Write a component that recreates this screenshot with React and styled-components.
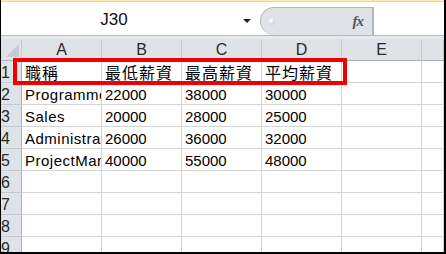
import { Fragment } from "react"
import styled, { createGlobalStyle } from "styled-components"

const GlobalStyle = createGlobalStyle`
body{
    margin: 0;
    background: #fff;
    font-family: "Liberation Sans", "Noto Sans CJK TC", sans-serif;
}
`

const columns = ["A", "B", "C", "D", "E", ""]

const rows = [
    ["職稱", "最低薪資", "最高薪資", "平均薪資", "", ""],
    ["Programmer", "22000", "38000", "30000", "", ""],
    ["Sales", "20000", "28000", "25000", "", ""],
    ["Administrator", "26000", "36000", "32000", "", ""],
    ["ProjectManager", "40000", "55000", "48000", "", ""],
    ["", "", "", "", "", ""],
    ["", "", "", "", "", ""],
    ["", "", "", "", "", ""],
    ["", "", "", "", "", ""],
]

function kindOf(v, ri){
    if(ri === 0) return "cjk"
    if(/^\d+$/.test(v)) return "num"
    return "text"
}

function App(){
    return <>
    <GlobalStyle />
    <Frame>
        <TopStripe />
        <FormulaBar>
            <NameBox>
                <span>J30</span>
                <Arrow />
            </NameBox>
            <FxPill>
                <Knob />
                <Fx>fx</Fx>
            </FxPill>
            <FormulaInput />
        </FormulaBar>
        <Band />
        <Sheet>
            <Corner><Triangle /></Corner>
            {columns.map((c, i) => <ColHead key={i}>{c}</ColHead>)}
            {rows.map((r, ri) => <Fragment key={ri}>
                <RowHead>{ri + 1}</RowHead>
                {r.map((v, ci) => <Cell key={ci} $kind={kindOf(v, ri)}>{v}</Cell>)}
            </Fragment>)}
            <Highlight />
        </Sheet>
    </Frame>
    </>
}

export default App

const Frame = styled.div`
width: 446px;
height: 254px;
box-sizing: border-box;
border-left: 1px solid #000;
border-right: 2px solid #000;
border-bottom: 2px solid #000;
overflow: hidden;
display: flex;
flex-direction: column;
background: #fff;
`

const TopStripe = styled.div`
height: 2px;
flex: none;
background: linear-gradient(#fbefb4 0 1px, #f3d86e 1px 2px);
`

const FormulaBar = styled.div`
height: 34px;
flex: none;
box-sizing: border-box;
border-bottom: 1px solid #b3b9c1;
display: flex;
align-items: flex-end;
`

const NameBox = styled.div`
width: 259px;
height: 100%;
display: flex;
align-items: center;
span{
    width: 226px;
    text-align: center;
    font-size: 17px;
    color: #111;
    padding-top: 3px;
}
`

const Arrow = styled.div`
margin-left: 16px;
margin-top: 4px;
width: 0;
height: 0;
border-left: 4px solid transparent;
border-right: 4px solid transparent;
border-top: 4px solid #222;
`

const FxPill = styled.div`
width: 113px;
height: 28px;
box-sizing: border-box;
background: #dfe3e8;
border: 1px solid #b3b9c1;
border-bottom: none;
border-radius: 14px 0 0 14px;
display: flex;
align-items: center;
justify-content: space-between;
padding: 0 9px 0 7px;
`

const Knob = styled.div`
width: 7px;
height: 7px;
border-radius: 50%;
background: radial-gradient(circle at 40% 35%, #ffffff, #bfc4ca);
`

const Fx = styled.span`
font-family: "Liberation Serif", "DejaVu Serif", serif;
font-style: italic;
font-weight: bold;
font-size: 15px;
color: #555;
letter-spacing: -1px;
`

const FormulaInput = styled.div`
flex: 1;
height: 28px;
box-sizing: border-box;
border-left: 1px solid #b3b9c1;
background: #fff;
`

const Band = styled.div`
height: 3px;
flex: none;
background: #e6e9ed;
`

const Sheet = styled.div`
position: relative;
flex: 1;
display: grid;
grid-template-columns: 21px repeat(5, 80px) 1fr;
grid-auto-rows: 22px;
align-content: start;
`

const Corner = styled.div`
box-sizing: border-box;
background: #dfe3e8;
border-right: 1px solid #c4c9d0;
border-bottom: 1px solid #abb1b9;
position: relative;
`

const Triangle = styled.div`
position: absolute;
right: 2px;
bottom: 3px;
width: 0;
height: 0;
border-left: 13px solid transparent;
border-bottom: 13px solid #c6cbd1;
`

const ColHead = styled.div`
box-sizing: border-box;
background: #dfe3e8;
border-right: 1px solid #c4c9d0;
border-bottom: 1px solid #abb1b9;
display: flex;
align-items: center;
justify-content: center;
font-size: 16px;
color: #2a2a2a;
padding-top: 1px;
`

const RowHead = styled.div`
box-sizing: border-box;
background: #dfe3e8;
border-right: 1px solid #abb1b9;
border-bottom: 1px solid #c4c9d0;
display: flex;
align-items: center;
padding-top: 2px;
font-size: 16px;
color: #2a2a2a;
`

const Cell = styled.div`
box-sizing: border-box;
border-right: 1px solid #d4d4d4;
border-bottom: 1px solid #d4d4d4;
display: flex;
align-items: center;
padding: ${p => p.$kind === "cjk" ? "1px 0 0 3px" : "2px 0 0 3px"};
white-space: nowrap;
overflow: hidden;
font-size: ${p => p.$kind === "cjk" ? "16px" : "15px"};
letter-spacing: ${p => p.$kind === "cjk" ? "1px" : p.$kind === "text" ? "0.5px" : "0"};
color: #000;
`

const Highlight = styled.div`
position: absolute;
left: 12px;
top: 19px;
width: 334px;
height: 27px;
box-sizing: border-box;
border: 4px solid #ee0000;
pointer-events: none;
`
